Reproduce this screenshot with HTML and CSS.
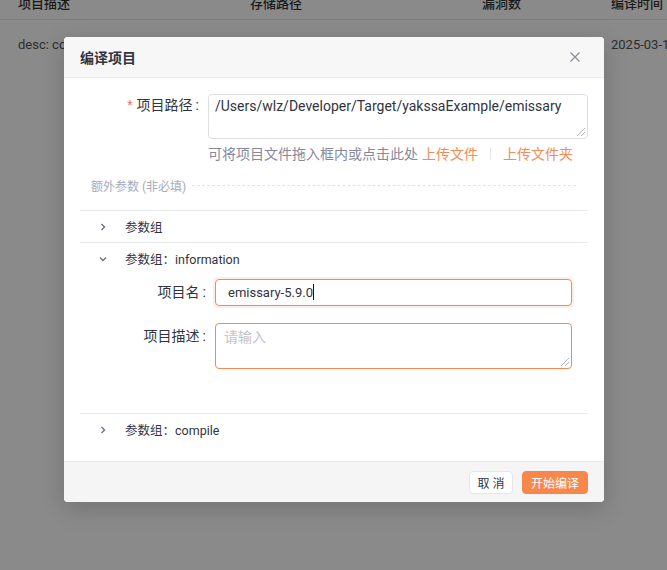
FILE: index.html
```html
<!DOCTYPE html>
<html lang="zh">
<head>
<meta charset="utf-8">
<title>编译项目</title>
<link rel="stylesheet" href="styles.css">
</head>
<body>
<div class="page">
  <div class="table">
    <div class="trow thead">
      <div>项目描述</div><div>存储路径</div><div>漏洞数</div><div>编译时间</div>
    </div>
    <div class="trow tbody">
      <div>desc: compile</div><div></div><div></div><div>2025-03-12</div>
    </div>
  </div>
</div>
<div class="mask"></div>
<div class="modal">
  <div class="modal-header">
    <span class="modal-title">编译项目</span>
    <svg class="close" width="12" height="12" viewBox="0 0 12 12"><path d="M1.5 1.5L10.5 10.5M10.5 1.5L1.5 10.5" stroke="#8a8d96" stroke-width="1.2" fill="none"/></svg>
  </div>
  <div class="modal-body">
    <div class="form-item">
      <label class="label"><span class="req">*</span>项目路径<span class="colon">:</span></label>
      <div class="control">
        <div class="textarea path">/Users/wlz/Developer/Target/yakssaExample/emissary<span class="grip"></span></div>
        <div class="help">可将项目文件拖入框内或点击此处<span class="link first">上传文件</span><span class="sep"></span><span class="link">上传文件夹</span></div>
      </div>
    </div>
    <div class="divider"><span>额外参数 (非必填)</span><i></i></div>
    <div class="collapse">
      <div class="panel">
        <div class="panel-head"><svg class="chev" width="10" height="10" viewBox="0 0 10 10"><path d="M3.5 2L6.5 5L3.5 8" stroke="#6b7080" stroke-width="1.4" fill="none"/></svg><span>参数组</span></div>
      </div>
      <div class="panel">
        <div class="panel-head"><svg class="chev" width="10" height="10" viewBox="0 0 10 10"><path d="M2 3.5L5 6.5L8 3.5" stroke="#6b7080" stroke-width="1.4" fill="none"/></svg><span>参数组：information</span></div>
        <div class="panel-content">
          <div class="row">
            <label class="label2">项目名<span class="colon">:</span></label>
            <div class="input focus">emissary-5.9.0<span class="caret"></span></div>
          </div>
          <div class="row">
            <label class="label2">项目描述<span class="colon">:</span></label>
            <div class="textarea desc"><span class="ph">请输入</span><span class="grip"></span></div>
          </div>
        </div>
      </div>
      <div class="panel">
        <div class="panel-head"><svg class="chev" width="10" height="10" viewBox="0 0 10 10"><path d="M3.5 2L6.5 5L3.5 8" stroke="#6b7080" stroke-width="1.4" fill="none"/></svg><span>参数组：compile</span></div>
      </div>
    </div>
  </div>
  <div class="modal-footer">
    <button class="btn cancel">取 消</button>
    <button class="btn primary">开始编译</button>
  </div>
</div>
</body>
</html>
```
FILE: styles.css
```css
* { box-sizing: border-box; }
html, body { margin: 0; padding: 0; }
body {
  width: 667px; height: 570px; overflow: hidden;
  background: #fff;
  font-family: "Roboto", "Noto Sans CJK SC", sans-serif;
  color: #31343f;
  position: relative;
}
.table { margin-top: -15px; }
.trow {
  display: grid;
  grid-template-columns: 232px 232px 129px 1fr;
  padding-left: 18px;
  font-size: 13px;
  white-space: nowrap;
  overflow: hidden;
}
.thead { height: 35px; align-items: center; border-bottom: 1px solid #e6e8ee; font-weight: 500; color: #333; }
.tbody { height: 48px; align-items: center; color: #555; }
.mask { position: absolute; inset: 0; background: rgba(0,0,0,0.46); }
.modal {
  position: absolute; left: 64px; top: 37px; width: 540px;
  background: #fff; border-radius: 4px; overflow: hidden;
  box-shadow: 0 6px 24px rgba(0,0,0,0.18);
}
.modal-header {
  height: 41px; background: #f7f7f7; border-bottom: 1px solid #e8e9ef;
  display: flex; align-items: center; justify-content: space-between;
  padding: 0 23px 0 16px;
}
.modal-title { font-size: 14px; font-weight: 600; color: #31343f; }
.close { display: block; }
.modal-body { padding: 16px 16px 16px; }
.form-item { display: flex; }
.label {
  width: 128px; padding-right: 8px; text-align: right;
  font-size: 14px; line-height: 22px; color: #31343f;
}
.colon { margin: 0 1px 0 3px; }
.req { color: #f4685e; margin-right: 4px; font-family: "Liberation Sans", sans-serif; }
.control { flex: 1; }
.textarea {
  position: relative; border: 1px solid #dcdee6; border-radius: 4px;
  font-size: 14px; color: #31343f; padding: 0 6px; line-height: 22px;
}
.path { height: 45px; }
.grip {
  position: absolute; right: 2px; bottom: 2px; width: 8px; height: 8px;
  background: linear-gradient(135deg, transparent 45%, #b4b7c0 45%, #b4b7c0 52%, transparent 52%, transparent 72%, #b4b7c0 72%, #b4b7c0 79%, transparent 79%);
}
.help { font-size: 14px; color: #85899a; line-height: 20px; margin-top: 5px; display: flex; align-items: center; white-space: nowrap; }
.help .link { color: #f28b54; }
.help .link.first { margin-left: 4px; }
.sep { display: inline-block; width: 1px; height: 12px; background: #e6e8ee; margin: 0 12px; }
.divider { display: flex; align-items: center; margin: 12px 12px 0 11px; height: 18px; }
.divider span { font-size: 12px; color: #a4abbb; white-space: nowrap; margin-right: 6px; }
.divider i { flex: 1; border-top: 1px dashed #e1e3ea; }
.collapse { margin-top: 16px; }
.panel { border-top: 1px solid #e9e9f0; }
.panel-head {
  height: 31px; display: flex; align-items: center; padding-left: 18px;
  font-size: 12.5px; color: #31343f;
}
.chev { margin-right: 17px; }
.panel-content { padding: 5px 16px 44px 0; }
.row { display: flex; margin-bottom: 17px; }
.row:last-child { margin-bottom: 0; }
.label2 { width: 135px; padding-right: 8px; text-align: right; font-size: 14px; line-height: 27px; color: #31343f; }
.input {
  flex: 1; height: 27px; border: 1px solid #f5894f; border-radius: 4px;
  font-size: 13px; line-height: 25px; padding-left: 12px; color: #31343f;
  box-shadow: 0 0 0 2px rgba(245,137,79,0.14);
}
.caret { display: inline-block; width: 1px; height: 16px; background: #111; vertical-align: -3px; }
.desc { flex: 1; height: 46px; border-color: #f5894f; padding: 2px 8px; }
.ph { color: #bfc2cc; }
.modal-footer {
  height: 41px; background: #f5f5f5; border-top: 1px solid #e8e9ef;
  display: flex; align-items: center; justify-content: flex-end; gap: 9px;
  padding-right: 16px;
}
.btn {
  height: 23px; border: 1px solid #e4e6ec; background: #fff; border-radius: 4px;
  font-family: inherit; font-size: 12px; color: #31343f; padding: 0;
}
.btn.cancel { width: 44px; }
.btn.primary { background: #f7874b; border-color: #f7874b; color: #fff; width: 66px; }
```
